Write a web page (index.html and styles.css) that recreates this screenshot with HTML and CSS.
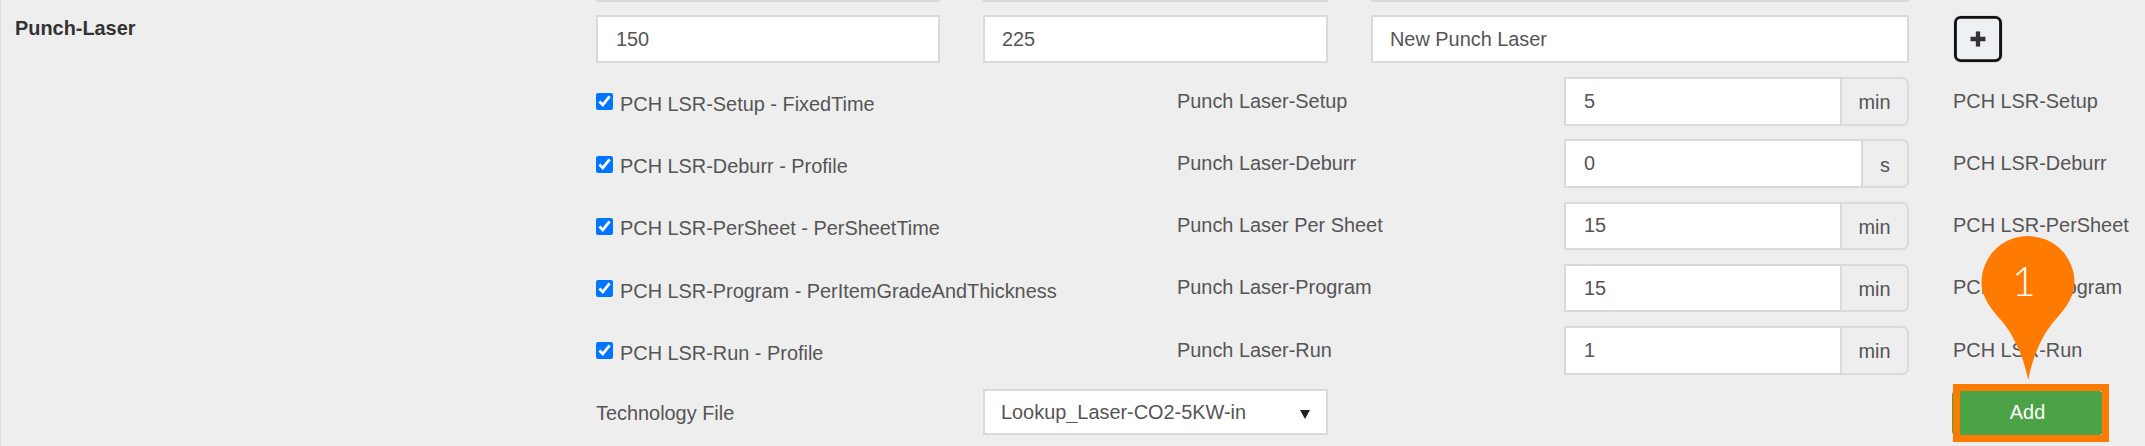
FILE: index.html
```html
<!DOCTYPE html>
<html lang="en">
<head>
<meta charset="utf-8">
<title>Punch-Laser</title>
<link rel="stylesheet" href="styles.css">
</head>
<body>
<div class="page">
  <div class="section-title">Punch-Laser</div>
  <div class="form">
    <div class="stub-row">
      <div class="stub c1"></div>
      <div class="stub c2"></div>
      <div class="stub c3"></div>
    </div>
    <div class="new-row">
      <input class="field field-wide c1" type="text" value="150">
      <input class="field c2" type="text" value="225">
      <input class="field c3" type="text" value="New Punch Laser">
      <button class="plus" type="button" aria-label="Add">
        <svg class="plus-icon" viewBox="0 0 16 16" width="16" height="16"><path d="M8 0v16M0 8h16"/></svg>
      </button>
    </div>
    <div class="op-row">
      <label class="check"><input type="checkbox" checked><span>PCH LSR-Setup - FixedTime</span></label>
      <div class="op-name">Punch Laser-Setup</div>
      <div class="group"><input class="group-input" type="text" value="5"><span class="unit">min</span></div>
      <div class="op-code">PCH LSR-Setup</div>
    </div>
    <div class="op-row">
      <label class="check"><input type="checkbox" checked><span>PCH LSR-Deburr - Profile</span></label>
      <div class="op-name">Punch Laser-Deburr</div>
      <div class="group"><input class="group-input" type="text" value="0"><span class="unit unit-s">s</span></div>
      <div class="op-code">PCH LSR-Deburr</div>
    </div>
    <div class="op-row">
      <label class="check"><input type="checkbox" checked><span>PCH LSR-PerSheet - PerSheetTime</span></label>
      <div class="op-name">Punch Laser Per Sheet</div>
      <div class="group"><input class="group-input" type="text" value="15"><span class="unit">min</span></div>
      <div class="op-code">PCH LSR-PerSheet</div>
    </div>
    <div class="op-row">
      <label class="check"><input type="checkbox" checked><span>PCH LSR-Program - PerItemGradeAndThickness</span></label>
      <div class="op-name">Punch Laser-Program</div>
      <div class="group"><input class="group-input" type="text" value="15"><span class="unit">min</span></div>
      <div class="op-code">PCH LSR-Program</div>
    </div>
    <div class="op-row">
      <label class="check"><input type="checkbox" checked><span>PCH LSR-Run - Profile</span></label>
      <div class="op-name">Punch Laser-Run</div>
      <div class="group"><input class="group-input" type="text" value="1"><span class="unit">min</span></div>
      <div class="op-code">PCH LSR-Run</div>
    </div>
    <div class="tech-row">
      <div class="tech-label">Technology File</div>
      <div class="select-wrap c2">
        <select class="select"><option>Lookup_Laser-CO2-5KW-in</option></select>
      </div>
      <button class="add" type="button">Add</button>
    </div>
  </div>

  <div class="highlight"></div>
  <div class="pin">
    <svg class="pin-shape" viewBox="0 0 94 145" width="94" height="145"><path d="M47 0A46.5 46.5 0 0 1 93.5 46.5C93.5 60 85 72 75 83C63 96 52 118 47.3 144C42 118 31 96 19 83C9 72 .5 60 .5 46.5A46.5 46.5 0 0 1 47 0Z"/></svg>
    <span class="pin-num">1</span>
  </div>
</div>
</body>
</html>
```

FILE: styles.css
```css
* { box-sizing: border-box; }

html, body {
  margin: 0;
  height: 100%;
  overflow: hidden;
}

body {
  background: #eeeeee;
  color: #555555;
  font-family: "Liberation Sans", Arial, sans-serif;
  font-size: 19.9px;
}

.page {
  position: relative;
  display: flex;
  height: 446px;
  border-left: 1px solid #dddddd;
}

.section-title {
  width: 595px;
  flex: none;
  padding: 16px 0 0 14px;
  color: #333333;
  font-weight: 700;
  line-height: 24px;
}

.form {
  flex: 1;
  display: flex;
  flex-direction: column;
}

.c1 { width: 344px; margin-right: 43px; }
.c2 { width: 345px; margin-right: 43px; }
.c3 { width: 538px; margin-right: 44px; }

.stub-row {
  display: flex;
  height: 15px;
}

.stub {
  height: 2px;
  border-bottom: 2px solid #d9d9d9;
}

.new-row {
  display: flex;
  height: 48px;
  margin-bottom: 14px;
}

.field,
.group-input,
.select {
  font: inherit;
  color: #555555;
  background: #ffffff;
  outline: none;
}

.field {
  height: 48px;
  padding: 0 17px;
  border: 2px solid #dadada;
}

.field-wide { padding: 0 18px; }

.plus {
  display: flex;
  align-items: center;
  justify-content: center;
  width: 50px;
  height: 48px;
  padding: 0;
  background: #eef1f4;
  border: 3px solid #111111;
  border-radius: 7px;
  box-shadow: 0 0 0 1px #dddddd;
  transform: scale(.96);
}

.plus-icon {
  fill: none;
  stroke: #333333;
  stroke-width: 4.5;
}

.op-row {
  display: flex;
  height: 48.5px;
  margin-bottom: 13.75px;
}

.check {
  display: flex;
  align-items: center;
  gap: 7px;
  width: 581px;
  flex: none;
  padding-top: 6px;
}

.check input {
  width: 17px;
  height: 17px;
  margin: 0 0 5px;
  flex: none;
}

.op-name {
  width: 387px;
  flex: none;
  padding-top: 11.5px;
  line-height: 24px;
}

.group {
  display: flex;
  width: 345px;
  flex: none;
  margin-right: 44px;
  border: 2px solid #dadada;
  border-radius: 0 7px 7px 0;
  overflow: hidden;
}

.group-input {
  flex: 1;
  min-width: 0;
  padding: 0 18px;
  border: 0;
}

.unit {
  display: flex;
  align-items: center;
  justify-content: center;
  width: 67px;
  flex: none;
  padding-top: 3px;
  background: #eeeeee;
  border-left: 2px solid #dadada;
}

.unit-s { width: 46px; }

.op-code {
  padding-top: 11.5px;
  line-height: 24px;
  white-space: nowrap;
}

.tech-row {
  display: flex;
  margin-top: .25px;
}

.tech-label {
  width: 387px;
  flex: none;
  line-height: 46px;
  padding-top: 1px;
}

.select-wrap {
  position: relative;
  width: 345px;
  height: 46.5px;
  margin-right: 624px;
}

.select-wrap::after {
  content: "";
  position: absolute;
  top: 21px;
  right: 18px;
  border-left: 5px solid transparent;
  border-right: 5px solid transparent;
  border-top: 9px solid #222222;
}

.select {
  display: block;
  width: 100%;
  height: 100%;
  padding: 0 16px;
  border: 2px solid #dadada;
  border-radius: 0;
  appearance: none;
}

.add {
  width: 151px;
  height: 44px;
  margin-top: 2px;
  padding: 0;
  font: inherit;
  color: #ffffff;
  background: #4ca346;
  border: 0;
  border-radius: 4px;
}

.highlight {
  position: absolute;
  left: 1952px;
  top: 384px;
  width: 156px;
  height: 58px;
  border: 7px solid #ff7a00;
}

.pin {
  position: absolute;
  left: 1980px;
  top: 236px;
  width: 94px;
  height: 145px;
}

.pin-shape {
  display: block;
  fill: #ff7a00;
}

.pin-num {
  position: absolute;
  top: 21px;
  left: 0;
  width: 86px;
  text-align: center;
  color: #ffffff;
  font-family: Lato, sans-serif;
  font-size: 41px;
  font-weight: 300;
  line-height: 48px;
}
```
